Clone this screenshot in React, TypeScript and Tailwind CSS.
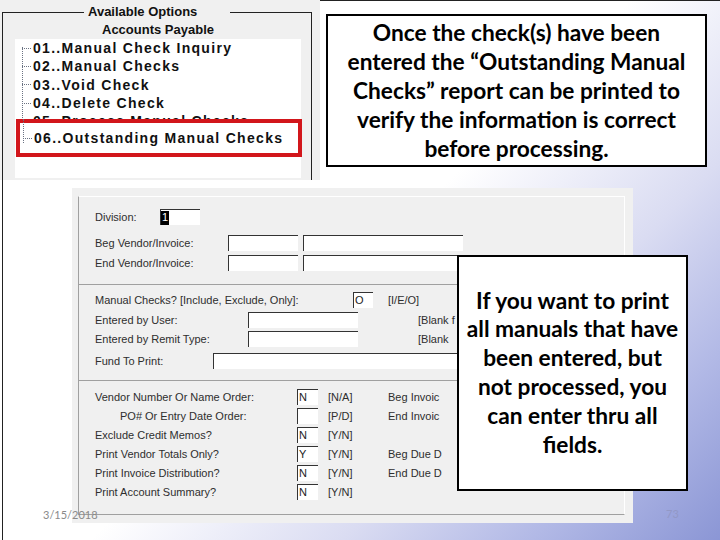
import React from 'react';

const menuItems = [
  '01..Manual Check Inquiry',
  '02..Manual Checks',
  '03..Void Check',
  '04..Delete Check',
  '05..Process Manual Checks',
];

function MenuRow({ label }: { label: string }) {
  return (
    <div className="flex items-center h-[18.3px]">
      <span className="w-[9px] ml-[7px] mr-[2px] border-t border-dotted border-gray-500" />
      <span className="text-[14px] font-bold tracking-[1.3px] text-[#111] leading-none">{label}</span>
    </div>
  );
}

function Field({ w, value, selected }: { w: number; value?: string; selected?: boolean }) {
  return (
    <div
      className="h-[16px] bg-white border-t border-l border-[#333] flex items-center text-[11px] leading-none text-[#222]"
      style={{ width: w }}
    >
      {selected ? (
        <span className="bg-black text-white px-[1px] h-[14px] flex items-center">{value}</span>
      ) : (
        <span className="pl-[1px]">{value}</span>
      )}
    </div>
  );
}

function YesNoRow({ label, value, hint, right, indent }: { label: string; value?: string; hint: string; right?: string; indent?: boolean }) {
  return (
    <div className="flex items-center h-[16px] mt-[3px]">
      <span className={`w-[202px] ${indent ? 'pl-[25px]' : ''}`}>{label}</span>
      <Field w={21} value={value} />
      <span className="w-[70px] pl-[10px]">{hint}</span>
      {right && <span className="whitespace-nowrap">{right}</span>}
    </div>
  );
}

export default function App() {
  return (
    <div className="relative w-[720px] h-[540px] overflow-hidden bg-[linear-gradient(135deg,#ffffff_0%,#ffffff_50%,#dadcf2_70%,#b2b9e6_85%,#8b96d5_100%)] font-['Liberation_Sans',Arial,sans-serif]">
      {/* top border strip */}
      <div className="absolute left-[320px] right-0 top-0 border-t border-[#222]" />
      {/* left line running down the slide */}
      <div className="absolute left-[2px] top-[12px] bottom-0 border-l border-[#222]" />

      {/* Menu screenshot */}
      <div className="absolute left-0 top-0 w-[320px] h-[180px] bg-[#f0f0f0]">
        <div className="absolute left-[3px] top-[12px] w-[309px] h-[168px] border-t border-r border-[#222]" />
        <div className="absolute left-[2px] top-[12px] bottom-0 border-l border-[#222]" />
        <div className="absolute left-[84px] top-[4px] w-[146px] bg-[#f0f0f0] pl-[4px] text-[13px] font-bold leading-[16px] text-[#111]">
          Available Options
        </div>
        <div className="absolute left-0 top-[22px] w-[316px] text-center text-[13px] font-bold leading-[16px] text-[#111]">
          Accounts Payable
        </div>
        <div className="absolute left-[15px] top-[39px] w-[286px] h-[139px] bg-white">
          <div className="absolute left-[7px] top-[8px] h-[93px] border-l border-dotted border-gray-500" />
          <div className="flex flex-col">
            {menuItems.map((m) => (
              <MenuRow key={m} label={m} />
            ))}
          </div>
        </div>
        {/* highlight */}
        <div className="absolute left-[16px] top-[119px] w-[286px] h-[38px] border-4 border-[#d2161b] bg-white flex items-center">
          <span className="absolute left-[3px] -top-[4px] h-[24px] border-l border-dotted border-gray-500" />
          <span className="w-[9px] ml-[3px] mr-[2px] border-t border-dotted border-gray-500" />
          <span className="text-[14px] font-bold tracking-[1.3px] text-[#111] leading-none">06..Outstanding Manual Checks</span>
        </div>
      </div>

      {/* Callout 1 */}
      <div className="absolute left-[326px] top-[14px] w-[381px] h-[153px] border-2 border-black bg-white flex items-center justify-center">
        <p className="font-['Lato',sans-serif] font-bold text-[22.7px] leading-[29px] text-black text-center">
          Once the check(s) have been
          <br />
          entered the “Outstanding Manual
          <br />
          Checks” report can be printed to
          <br />
          verify the information is correct
          <br />
          before processing.
        </p>
      </div>

      {/* Report options screenshot */}
      <div className="absolute left-[72px] top-[188px] w-[561px] h-[335px] bg-[#f0f0f0] pt-[8px] pl-[6px]">
        <div className="w-[547px] h-[319px] border-l border-b border-[#a0a0a0] border-t border-t-white border-r border-r-white flex flex-col text-[11px] leading-none text-[#2e2e2e]">
          {/* section 1 */}
          <div className="h-[87px] pl-[16px] pt-[12px]">
            <div className="flex items-center h-[16px]">
              <span className="w-[65px]">Division:</span>
              <Field w={40} value="1" selected />
            </div>
            <div className="flex items-center h-[16px] mt-[10px]">
              <span className="w-[133px]">Beg Vendor/Invoice:</span>
              <Field w={70} />
              <span className="w-[5px]" />
              <Field w={160} />
            </div>
            <div className="flex items-center h-[16px] mt-[4px]">
              <span className="w-[133px]">End Vendor/Invoice:</span>
              <Field w={70} />
              <span className="w-[5px]" />
              <Field w={160} />
            </div>
          </div>
          {/* section 2 */}
          <div className="h-[96px] border-t border-[#a0a0a0] pl-[16px] pt-[7px]">
            <div className="flex items-center h-[16px]">
              <span className="w-[258px]">Manual Checks? [Include, Exclude, Only]:</span>
              <Field w={20} value="O" />
              <span className="pl-[15px]">[I/E/O]</span>
            </div>
            <div className="flex items-center h-[16px] mt-[4px]">
              <span className="w-[153px]">Entered by User:</span>
              <Field w={110} />
              <span className="ml-[60px] whitespace-nowrap">[Blank f</span>
            </div>
            <div className="flex items-center h-[16px] mt-[3px]">
              <span className="w-[153px]">Entered by Remit Type:</span>
              <Field w={110} />
              <span className="ml-[60px] whitespace-nowrap">[Blank</span>
            </div>
            <div className="flex items-center h-[16px] mt-[6px]">
              <span className="w-[118px]">Fund To Print:</span>
              <Field w={300} />
            </div>
          </div>
          {/* section 3 */}
          <div className="flex-1 border-t border-[#a0a0a0] pl-[16px] pt-[5px]">
            <YesNoRow label="Vendor Number Or Name Order:" value="N" hint="[N/A]" right="Beg Invoic" />
            <YesNoRow label="PO# Or Entry Date Order:" hint="[P/D]" right="End Invoic" indent />
            <YesNoRow label="Exclude Credit Memos?" value="N" hint="[Y/N]" />
            <YesNoRow label="Print Vendor Totals Only?" value="Y" hint="[Y/N]" right="Beg Due D" />
            <YesNoRow label="Print Invoice Distribution?" value="N" hint="[Y/N]" right="End Due D" />
            <YesNoRow label="Print Account Summary?" value="N" hint="[Y/N]" />
          </div>
        </div>
      </div>

      {/* slide footer */}
      <div className="absolute left-[43px] top-[508px] text-[11px] leading-[14px] text-[#8a8a8a] font-['Lato',sans-serif]">3/15/2018</div>
      <div className="absolute left-[666px] top-[507px] text-[11px] leading-[14px] text-[#9298c6] font-['Lato',sans-serif]">73</div>

      {/* Callout 2 */}
      <div className="absolute left-[457px] top-[255px] w-[231px] h-[236px] border-2 border-black bg-white flex items-center justify-center">
        <p className="font-['Lato',sans-serif] font-bold text-[22.7px] leading-[28.8px] text-black text-center">
          If you want to print
          <br />
          all manuals that have
          <br />
          been entered, but
          <br />
          not processed, you
          <br />
          can enter thru all
          <br />
          fields.
        </p>
      </div>
    </div>
  );
}
